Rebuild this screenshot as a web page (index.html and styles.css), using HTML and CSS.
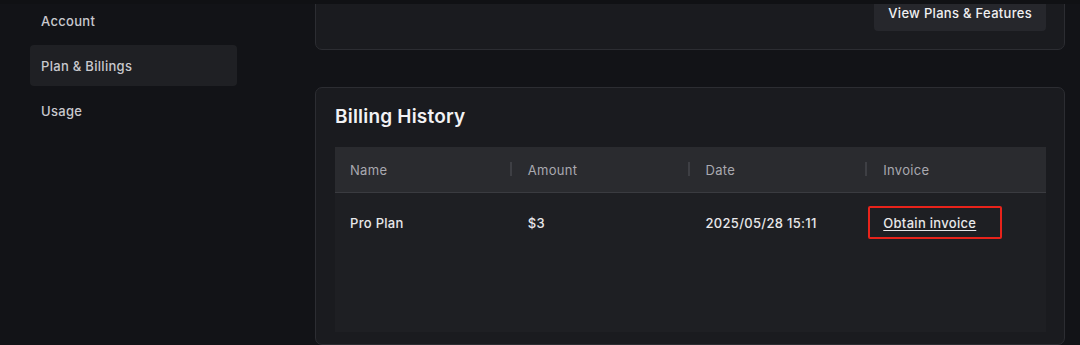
FILE: index.html
```html
<!DOCTYPE html>
<html lang="en">
<head>
  <meta charset="UTF-8">
  <meta name="viewport" content="width=device-width, initial-scale=1">
  <title>Plan &amp; Billings</title>
  <link rel="stylesheet" href="styles.css">
</head>
<body>

  <div class="topbar"></div>

  <div class="layout">
    <nav class="sidebar">
      <a class="nav-item">Account</a>
      <a class="nav-item active">Plan &amp; Billings</a>
      <a class="nav-item">Usage</a>
    </nav>

    <main class="content">
      <section class="card plan-card">
        <button class="btn">View Plans &amp; Features</button>
      </section>

      <section class="card history-card">
        <h2 class="card-title">Billing History</h2>
        <div class="table">
          <div class="thead">
            <div class="th">Name</div>
            <div class="th">Amount</div>
            <div class="th">Date</div>
            <div class="th">Invoice</div>
          </div>
          <div class="tbody">
            <div class="tr">
              <div class="td">Pro Plan</div>
              <div class="td">$3</div>
              <div class="td">2025/05/28 15:11</div>
              <div class="td">
                <span class="invoice">
                  <a class="link" href="#">Obtain invoice</a>
                  <span class="mark"></span>
                </span>
              </div>
            </div>
          </div>
        </div>
      </section>
    </main>
  </div>

</body>
</html>
```

FILE: styles.css
```css
* {
  box-sizing: border-box;
}

body {
  margin: 0;
  height: 345px;
  overflow: hidden;
  background: #121317;
  color: #e4e4e7;
  font-family: 'Inter', 'Noto Sans', sans-serif;
  font-size: 13px;
  letter-spacing: 0.3px;
}

.topbar {
  position: relative;
  z-index: 2;
  height: 4px;
  background: #101114;
}

.layout {
  display: flex;
  height: 341px;
  overflow: hidden;
}

/* sidebar */
.sidebar {
  width: 315px;
  flex-shrink: 0;
  padding: 0 78px 0 30px;
  margin-top: -4px;
  display: flex;
  flex-direction: column;
}

.nav-item {
  display: flex;
  align-items: center;
  height: 41px;
  margin-bottom: 4px;
  padding: 0 11px;
  border-radius: 4px;
  color: #c9c9ce;
  font-weight: 500;
  cursor: pointer;
}

.nav-item.active {
  background: #1f2024;
}

/* content */
.content {
  width: 750px;
  display: flex;
  flex-direction: column;
  gap: 38px;
}

.card {
  background: #1a1b1f;
  border: 1px solid #2c2d32;
  border-radius: 7px;
  padding: 0 18px 0 19px;
}

.plan-card {
  margin-top: -40px;
  padding-top: 30px;
  padding-bottom: 18px;
  display: flex;
  justify-content: flex-end;
}

.btn {
  height: 36px;
  padding: 0 14px;
  border: none;
  border-radius: 4px;
  background: #26272c;
  color: #f0f0f2;
  font: inherit;
  letter-spacing: inherit;
  font-weight: 500;
  cursor: pointer;
}

.history-card {
  flex: 1;
  margin-top: -1px;
  padding-top: 17px;
}

.card-title {
  margin: 0 0 18px;
  height: 24px;
  line-height: 24px;
  font-size: 19px;
  font-weight: 600;
  letter-spacing: 0.2px;
  color: #f2f2f4;
}

/* table */
.thead,
.tr {
  display: grid;
  grid-template-columns: repeat(4, 1fr);
}

.thead {
  height: 46px;
  background: #2a2b2f;
  border-bottom: 1px solid #3a3b40;
}

.th {
  position: relative;
  display: flex;
  align-items: center;
  padding: 0 15px;
  color: #a9a9af;
}

.th:not(:last-child)::before {
  content: '';
  position: absolute;
  right: 1px;
  top: 15px;
  width: 2px;
  height: 14px;
  background: #3e3f44;
}

.tbody {
  height: 139px;
  background: #1e1f23;
}

.tr {
  height: 60px;
}

.td {
  display: flex;
  align-items: center;
  padding: 0 15px;
  color: #e8e8ea;
  font-weight: 500;
}

.invoice {
  position: relative;
}

.link {
  color: #e8e8ea;
  text-decoration: underline;
  text-underline-offset: 2px;
}

/* red annotation box drawn over the link */
.mark {
  position: absolute;
  left: -15px;
  right: -26px;
  top: -9px;
  bottom: -8px;
  border: 2px solid #e8231b;
  border-radius: 2px;
}
```
